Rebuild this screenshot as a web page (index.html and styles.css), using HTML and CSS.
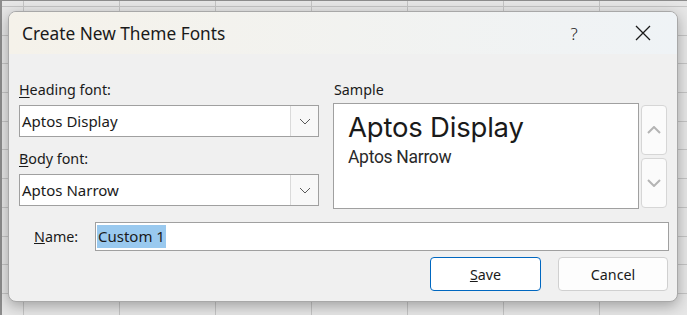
FILE: index.html
```html
<!DOCTYPE html>
<html lang="en">
<head>
    <meta charset="utf-8">
    <title>Create New Theme Fonts</title>
    <link rel="stylesheet" href="styles.css">
</head>
<body>
    <div class="sheet">
        <div class="dialog">
            <div class="titlebar">
                <span class="title">Create New Theme Fonts</span>
                <span class="title-btn help">?</span>
                <span class="title-btn close">
                    <svg width="16" height="16" viewBox="0 0 16 16"><path d="M1 1 L15 15 M15 1 L1 15" stroke="#1a1a1a" stroke-width="1.3" fill="none"/></svg>
                </span>
            </div>

            <div class="content">
                <div class="top-row">
                    <div class="fonts-col">
                        <div class="label"><u>H</u>eading font:</div>
                        <div class="combo">
                            <span class="combo-text">Aptos Display</span>
                            <span class="combo-btn">
                                <svg width="12" height="7" viewBox="0 0 12 7"><path d="M1 1 L6 6 L11 1" stroke="#5a5a5a" stroke-width="1" fill="none"/></svg>
                            </span>
                        </div>
                        <div class="label second"><u>B</u>ody font:</div>
                        <div class="combo">
                            <span class="combo-text">Aptos Narrow</span>
                            <span class="combo-btn">
                                <svg width="12" height="7" viewBox="0 0 12 7"><path d="M1 1 L6 6 L11 1" stroke="#5a5a5a" stroke-width="1" fill="none"/></svg>
                            </span>
                        </div>
                    </div>

                    <div class="sample-col">
                        <div class="label sample-label">Sample</div>
                        <div class="sample-wrap">
                            <div class="sample-box">
                                <div class="sample-heading">Aptos Display</div>
                                <div class="sample-body">Aptos Narrow</div>
                            </div>
                            <div class="scroll">
                                <div class="scroll-btn">
                                    <svg width="14" height="8" viewBox="0 0 14 8"><path d="M1 7 L7 1 L13 7" stroke="#b4b4b4" stroke-width="2" fill="none"/></svg>
                                </div>
                                <div class="scroll-btn">
                                    <svg width="14" height="8" viewBox="0 0 14 8"><path d="M1 1 L7 7 L13 1" stroke="#b4b4b4" stroke-width="2" fill="none"/></svg>
                                </div>
                            </div>
                        </div>
                    </div>
                </div>

                <div class="name-row">
                    <span class="name-label"><u>N</u>ame:</span>
                    <div class="name-input"><span class="selected">Custom 1</span></div>
                </div>

                <div class="buttons">
                    <div class="btn primary"><u>S</u>ave</div>
                    <div class="btn">Cancel</div>
                </div>
            </div>
        </div>
    </div>
</body>
</html>
```

FILE: styles.css
```css
html, body {
    margin: 0;
    padding: 0;
}
body {
    width: 687px;
    height: 315px;
    overflow: hidden;
    font-family: "Noto Sans", "Open Sans", sans-serif;
    color: #1a1a1a;
    background-color: #e6e6e6;
    background-image:
        repeating-linear-gradient(to right, transparent 0, transparent 23px, #c4c4c4 23px, #c4c4c4 24px, transparent 24px, transparent 96px),
        repeating-linear-gradient(to bottom, transparent 0, transparent 6px, #c4c4c4 6px, #c4c4c4 7px, transparent 7px, transparent 28.7px);
}
.sheet {
    height: 315px;
    box-sizing: border-box;
    border-top: 1px solid #8c8c8c;
    border-left: 2px solid #8c8c8c;
    padding: 10px 0 0 6px;
}
.dialog {
    width: 670px;
    height: 291px;
    box-sizing: border-box;
    border: 1px solid #a8a8a8;
    border-radius: 8px;
    background-color: #f0f0f0;
    overflow: hidden;
    box-shadow: 0 4px 14px rgba(0,0,0,0.3);
}
.titlebar {
    height: 42px;
    display: flex;
    align-items: center;
    padding: 0 11px 0 13px;
    background: linear-gradient(to right, #f5f2ea, #eff3f6);
}
.title {
    flex: 1;
    font-size: 17.3px;
    color: #1a1a1a;
}
.title-btn {
    width: 46px;
    display: flex;
    justify-content: center;
    align-items: center;
    font-size: 17px;
    font-weight: 300;
}
.help {
    margin-right: 23px;
}
.content {
    padding: 26px 10px 0 10px;
}
.top-row {
    display: flex;
    gap: 14px;
}
.fonts-col {
    width: 301px;
}
.label {
    height: 20px;
    line-height: 20px;
    font-size: 14.3px;
    margin-bottom: 5px;
}
.label.second {
    margin-top: 12px;
}
.label u {
    text-underline-offset: 2px;
}
.combo {
    height: 32px;
    box-sizing: border-box;
    border: 1px solid #a0a0a0;
    background-color: white;
    display: flex;
    align-items: stretch;
}
.combo-text {
    flex: 1;
    padding-left: 2px;
    line-height: 30px;
    font-size: 15px;
}
.combo-btn {
    width: 27px;
    border-left: 1px solid #dadada;
    background-color: #f8f8f8;
    display: flex;
    align-items: center;
    justify-content: center;
}
.sample-col {
    flex: 1;
}
.sample-label {
    margin-bottom: 3px;
    padding-left: 1px;
}
.sample-wrap {
    display: flex;
    gap: 2px;
}
.sample-box {
    width: 306px;
    height: 106px;
    box-sizing: border-box;
    border: 1px solid #a0a0a0;
    background-color: white;
    padding: 7px 0 0 14px;
}
.sample-heading {
    font-family: "Inter", "Roboto", sans-serif;
    font-size: 27.5px;
    line-height: 32px;
    letter-spacing: -0.2px;
}
.sample-body {
    font-family: "Roboto", sans-serif;
    font-size: 17.5px;
    line-height: 22px;
    letter-spacing: -0.3px;
    margin-top: 3px;
    color: #2a2a2a;
}
.scroll {
    display: flex;
    flex-direction: column;
    gap: 3px;
    padding-top: 2px;
}
.scroll-btn {
    width: 26px;
    height: 50px;
    box-sizing: border-box;
    border: 1px solid #d6d6d6;
    border-radius: 4px;
    background-color: #fbfbfb;
    display: flex;
    align-items: center;
    justify-content: center;
}
.name-row {
    display: flex;
    align-items: center;
    margin-top: 13px;
    margin-right: -2px;
    padding-left: 15px;
}
.name-label {
    width: 61px;
    font-size: 14.3px;
}
.name-input {
    flex: 1;
    height: 29px;
    box-sizing: border-box;
    border: 1px solid #a0a0a0;
    background-color: white;
    display: flex;
    align-items: center;
    padding-left: 1px;
}
.selected {
    background-color: #99c9ef;
    font-size: 15px;
    line-height: 23px;
    padding: 0 1px;
}
.buttons {
    display: flex;
    justify-content: flex-end;
    gap: 17px;
    margin-top: 6px;
    margin-right: -1px;
}
.btn {
    width: 110px;
    height: 34px;
    box-sizing: border-box;
    border: 1px solid #d0d0d0;
    border-radius: 4px;
    background-color: #fdfdfd;
    display: flex;
    align-items: center;
    justify-content: center;
    font-size: 14.3px;
}
.btn.primary {
    width: 111px;
    border-color: #0067c0;
    background-color: white;
}
```
